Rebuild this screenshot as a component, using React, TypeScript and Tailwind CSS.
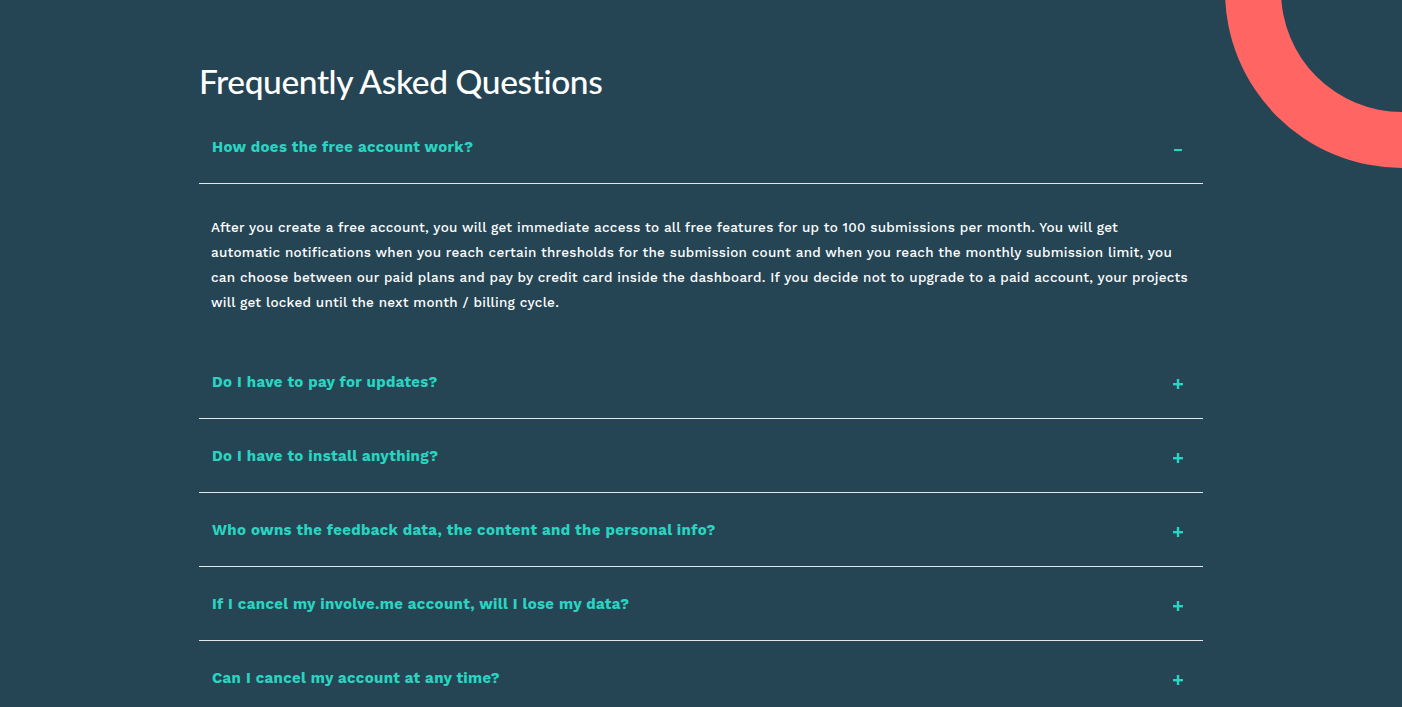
import React, { useState } from 'react';

type Faq = { q: string; a: string[] };

const faqs: Faq[] = [
  {
    q: 'How does the free account work?',
    a: [
      'After you create a free account, you will get immediate access to all free features for up to 100 submissions per month. You will get',
      'automatic notifications when you reach certain thresholds for the submission count and when you reach the monthly submission limit, you',
      'can choose between our paid plans and pay by credit card inside the dashboard. If you decide not to upgrade to a paid account, your projects',
      'will get locked until the next month / billing cycle.',
    ],
  },
  { q: 'Do I have to pay for updates?', a: [] },
  { q: 'Do I have to install anything?', a: [] },
  { q: 'Who owns the feedback data, the content and the personal info?', a: [] },
  { q: 'If I cancel my involve.me account, will I lose my data?', a: [] },
  { q: 'Can I cancel my account at any time?', a: [] },
];

const Toggle: React.FC<{ open: boolean }> = ({ open }) =>
  open ? (
    <svg width="10" height="10" viewBox="0 0 10 10" className="shrink-0 mt-[5px]">
      <rect x="1" y="4" width="8" height="2" fill="#2ad4c0" />
    </svg>
  ) : (
    <svg width="10" height="10" viewBox="0 0 10 10" className="shrink-0 mt-[4px]">
      <rect x="0" y="4" width="10" height="2.4" fill="#2ad4c0" />
      <rect x="3.8" y="0" width="2.4" height="10" fill="#2ad4c0" />
    </svg>
  );

export default function App() {
  const [openIdx, setOpenIdx] = useState<number>(0);

  return (
    <div className="relative min-h-screen w-full overflow-hidden bg-[#254555] font-['Work_Sans','Open_Sans',sans-serif]">
      <svg
        className="absolute right-0 top-0"
        width="180"
        height="170"
        viewBox="1222 0 180 170"
      >
        <path
          d="M 1402 -9 m -177 0 a 177 177 0 0 0 177 177 v -56 a 121 121 0 0 1 -121 -121 z"
          fill="#ff6663"
        />
      </svg>

      <div className="mx-auto w-[1004px] pt-[57px]">
        <h1 className="text-[33.5px] leading-[48px] font-medium tracking-[-0.4px] text-white font-['Lato',sans-serif]">
          Frequently Asked Questions
        </h1>

        <div className="mt-[5px]">
          {faqs.map((f, i) => {
            const open = openIdx === i;
            return (
              <div key={f.q}>
                <button
                  onClick={() => setOpenIdx(open ? -1 : i)}
                  className="flex w-full items-center justify-between border-b border-[#e4e8ea] pl-[13px] pr-[20px] pt-[27px] pb-[26px] text-left"
                >
                  <span className="text-[15px] leading-[20px] font-bold tracking-[0.35px] text-[#2ad4c0]">{f.q}</span>
                  <Toggle open={open} />
                </button>
                {open && f.a.length > 0 && (
                  <p className="pl-[12px] pr-[10px] pt-[31px] pb-[30px] text-[13.5px] leading-[25px] font-medium tracking-[0.25px] text-white whitespace-nowrap">
                    {f.a.map((line, j) => (
                      <React.Fragment key={j}>
                        {line}
                        {j < f.a.length - 1 && <br />}
                      </React.Fragment>
                    ))}
                  </p>
                )}
              </div>
            );
          })}
        </div>
      </div>
    </div>
  );
}
